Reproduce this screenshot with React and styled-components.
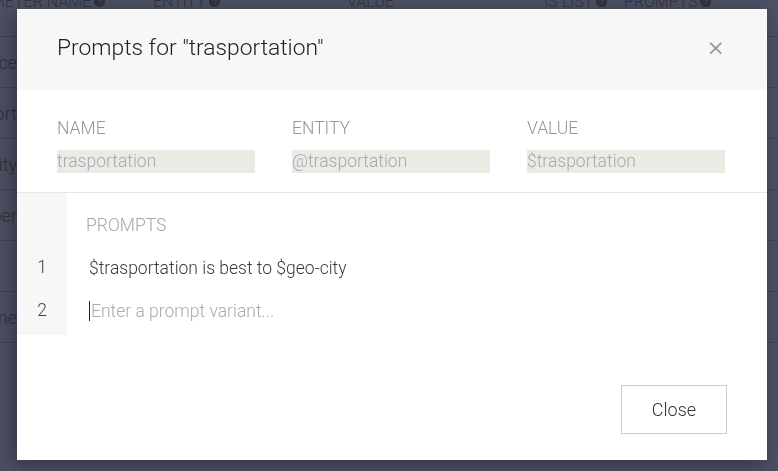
import React from "react";
import styled, { createGlobalStyle } from "styled-components";

const rows = ["place", "trasport", "geo-city", "number", "", "name"];

const fields = [
  { label: "Name", value: "trasportation" },
  { label: "Entity", value: "@trasportation" },
  { label: "Value", value: "$trasportation" },
];

const prompts = ["$trasportation is best to $geo-city"];

const HelpIcon = () => (
  <svg width="11" height="11" viewBox="0 0 16 16">
    <circle cx="8" cy="8" r="8" fill="currentColor" />
    <path
      d="M6 6.2c0-1.2.9-2 2.1-2 1.2 0 2 .8 2 1.8 0 1.3-1.5 1.4-1.5 2.7"
      stroke="#4b4f60"
      strokeWidth="1.7"
      fill="none"
    />
    <circle cx="8.6" cy="11.6" r="1" fill="#4b4f60" />
  </svg>
);

const App = () => {
  return (
    <>
      <GlobalStyle />
      <Page>
        <Table>
          <HeadRow>
            <HeadCell $w={201}>
              Parameter name <HelpIcon />
            </HeadCell>
            <HeadCell $w={194}>
              Entity <HelpIcon />
            </HeadCell>
            <HeadCell $w={197}>Value</HeadCell>
            <HeadCell $w={80}>
              Is list <HelpIcon />
            </HeadCell>
            <HeadCell $w={110}>
              Prompts <HelpIcon />
            </HeadCell>
          </HeadRow>
          {rows.map((r, i) => (
            <Row key={i}>
              <RowName>{r}</RowName>
            </Row>
          ))}
        </Table>
      </Page>

      <Overlay>
        <Modal>
          <Header>
            <Title>Prompts for "trasportation"</Title>
            <CloseX>×</CloseX>
          </Header>

          <Fields>
            {fields.map((f) => (
              <Field key={f.label}>
                <FieldLabel>{f.label}</FieldLabel>
                <FieldInput>{f.value}</FieldInput>
              </Field>
            ))}
          </Fields>

          <PromptsSection>
            <Gutter>
              <LineNo>1</LineNo>
              <LineNo>2</LineNo>
            </Gutter>
            <PromptsBody>
              <PromptsLabel>Prompts</PromptsLabel>
              {prompts.map((p) => (
                <PromptRow key={p}>{p}</PromptRow>
              ))}
              <PromptRow $placeholder>
                <Caret />
                Enter a prompt variant...
              </PromptRow>
            </PromptsBody>
          </PromptsSection>

          <Footer>
            <CloseButton>Close</CloseButton>
          </Footer>
        </Modal>
      </Overlay>
    </>
  );
};

const GlobalStyle = createGlobalStyle`
  html, body {
    margin: 0;
    padding: 0;
    background: #4b4f60;
    overflow: hidden;
    font-family: Roboto, "Liberation Sans", sans-serif;
  }
`;

const Page = styled.div`
  width: 778px;
  height: 471px;
  overflow: hidden;
  background: #4c5062;
`;

const Table = styled.div`
  margin: -9px 0 0 -48px;
`;

const HeadRow = styled.div`
  display: flex;
  height: 46px;
  padding-top: 1px;
  box-sizing: border-box;
  border-bottom: 1px solid #404350;
`;

const HeadCell = styled.div`
  width: ${(p) => p.$w}px;
  flex-shrink: 0;
  display: flex;
  align-items: flex-start;
  gap: 3px;
  font-size: 16px;
  font-weight: 300;
  white-space: nowrap;
  text-transform: uppercase;
  color: #30333c;
  svg {
    margin-top: 4px;
  }
`;

const Row = styled.div`
  height: 51px;
  display: flex;
  align-items: center;
  border-bottom: 1px solid #404350;
  box-sizing: border-box;
`;

const RowName = styled.div`
  width: 65px;
  text-align: right;
  font-size: 18px;
  font-weight: 300;
  color: #2c2f38;
`;

const Overlay = styled.div`
  position: fixed;
  inset: 0;
  padding: 9px 0 0 17px;
`;

const Modal = styled.div`
  width: 750px;
  height: 451px;
  background: #fff;
  display: flex;
  flex-direction: column;
  box-shadow: -4px 6px 18px rgba(20, 22, 30, 0.45);
`;

const Header = styled.div`
  height: 81px;
  flex-shrink: 0;
  background: #f7f7f7;
  display: flex;
  align-items: center;
  justify-content: space-between;
  padding: 0 42px 4px 40px;
  box-sizing: border-box;
`;

const Title = styled.h2`
  margin: 0;
  font-size: 22.8px;
  font-weight: 300;
  color: #222;
`;

const CloseX = styled.span`
  font-size: 22px;
  line-height: 1;
  color: #9a9a9a;
  font-family: "DejaVu Sans", sans-serif;
`;

const Fields = styled.div`
  display: grid;
  grid-template-columns: repeat(3, 198px);
  column-gap: 37px;
  padding: 28px 40px 19px;
  border-bottom: 1px solid #e6e6e6;
`;

const Field = styled.div`
  display: flex;
  flex-direction: column;
  gap: 12px;
`;

const FieldLabel = styled.div`
  font-size: 17.5px;
  font-weight: 300;
  line-height: 20px;
  text-transform: uppercase;
  color: #8f96a5;
`;

const FieldInput = styled.div`
  height: 23px;
  line-height: 23px;
  background: #ebebe4;
  font-size: 17.5px;
  font-weight: 300;
  color: #a3a9b6;
`;

const PromptsSection = styled.div`
  display: flex;
  align-items: flex-start;
`;

const Gutter = styled.div`
  width: 50px;
  padding: 53px 0 3px;
  background: #f7f7f7;
`;

const LineNo = styled.div`
  height: 43px;
  line-height: 43px;
  text-align: center;
  font-size: 17.5px;
  font-weight: 300;
  color: #444;
`;

const PromptsBody = styled.div`
  flex: 1;
  padding: 22px 0 0 19px;
`;

const PromptsLabel = styled.div`
  font-size: 17.5px;
  font-weight: 300;
  line-height: 20px;
  text-transform: uppercase;
  color: #a0a6b4;
  margin-bottom: 11px;
`;

const PromptRow = styled.div`
  height: 43px;
  display: flex;
  align-items: center;
  padding-left: 3px;
  margin-top: ${(p) => (p.$placeholder ? "0" : "2px")};
  font-size: 17.5px;
  font-weight: 300;
  color: ${(p) => (p.$placeholder ? "#aaaaaa" : "#3a3a3a")};
`;

const Caret = styled.span`
  width: 1px;
  height: 20px;
  background: #222;
  margin-right: 1px;
`;

const Footer = styled.div`
  margin-top: auto;
  display: flex;
  justify-content: flex-end;
  padding: 0 40px 26px;
`;

const CloseButton = styled.button`
  width: 106px;
  height: 49px;
  background: #fff;
  border: 1px solid #cccccc;
  font-family: Roboto, "Liberation Sans", sans-serif;
  font-size: 18px;
  font-weight: 300;
  color: #333;
  cursor: pointer;
`;

export default App;
